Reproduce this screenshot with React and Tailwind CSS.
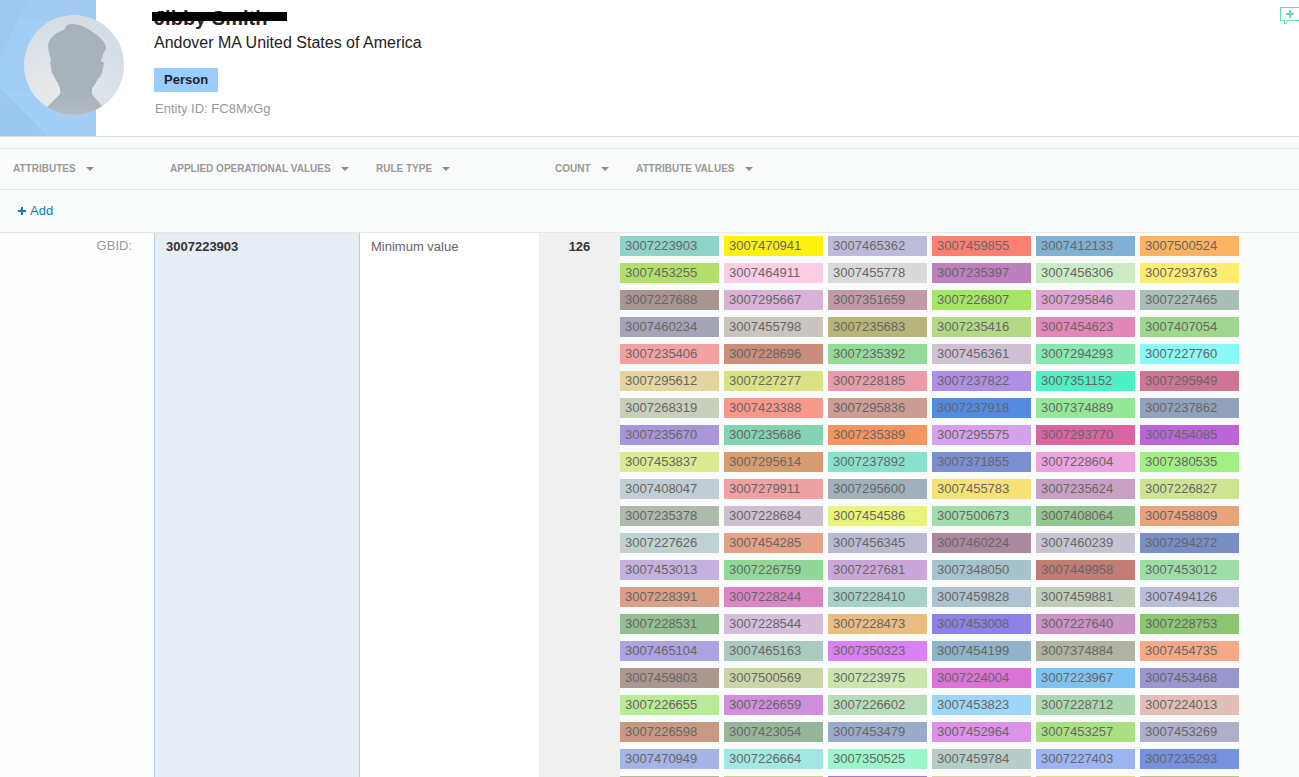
import React from "react";

const COLUMNS = [
  { label: "Attributes", cls: "w-[154px] pl-[13px]" },
  { label: "Applied Operational Values", cls: "w-[206px] pl-4" },
  { label: "Rule Type", cls: "w-[179px] pl-4" },
  { label: "Count", cls: "w-[81px] pl-4" },
  { label: "Attribute Values", cls: "pl-4" },
];

const VALUES = [
  ["3007223903", "bg-[#8dd3c7]"], ["3007470941", "bg-[#fff10c]"], ["3007465362", "bg-[#bebada]"], ["3007459855", "bg-[#fb8072]"], ["3007412133", "bg-[#80b1d3]"], ["3007500524", "bg-[#fdb462]"],
  ["3007453255", "bg-[#b3de69]"], ["3007464911", "bg-[#fccde5]"], ["3007455778", "bg-[#d9d9d9]"], ["3007235397", "bg-[#bc80bd]"], ["3007456306", "bg-[#ccebc5]"], ["3007293763", "bg-[#ffed6f]"],
  ["3007227688", "bg-[#a99491]"], ["3007295667", "bg-[#d9b3d7]"], ["3007351659", "bg-[#c19ba6]"], ["3007226807", "bg-[#a4e566]"], ["3007295846", "bg-[#dda4d3]"], ["3007227465", "bg-[#a9beb5]"],
  ["3007460234", "bg-[#a6a5b8]"], ["3007455798", "bg-[#ccc4be]"], ["3007235683", "bg-[#b7b57a]"], ["3007235416", "bg-[#b3d985]"], ["3007454623", "bg-[#e287ba]"], ["3007407054", "bg-[#9fd78f]"],
  ["3007235406", "bg-[#f5a1a2]"], ["3007228696", "bg-[#ca8c7b]"], ["3007235392", "bg-[#95da9b]"], ["3007456361", "bg-[#cfc1d3]"], ["3007294293", "bg-[#87e8b1]"], ["3007227760", "bg-[#8bf9f7]"],
  ["3007295612", "bg-[#e4d59f]"], ["3007227277", "bg-[#dae283]"], ["3007228185", "bg-[#eb9aaa]"], ["3007237822", "bg-[#af8fe4]"], ["3007351152", "bg-[#4cf2c5]"], ["3007295949", "bg-[#cf7593]"],
  ["3007268319", "bg-[#c9cfbc]"], ["3007423388", "bg-[#f9978b]"], ["3007295836", "bg-[#cc9d92]"], ["3007237918", "bg-[#528be0]"], ["3007374889", "bg-[#95e898]"], ["3007237862", "bg-[#91a1bc]"],
  ["3007235670", "bg-[#aa95d9]"], ["3007235686", "bg-[#84d3b2]"], ["3007235389", "bg-[#f59660]"], ["3007295575", "bg-[#d6a1eb]"], ["3007293770", "bg-[#db65a2]"], ["3007454085", "bg-[#bb65d9]"],
  ["3007453837", "bg-[#dcea92]"], ["3007295614", "bg-[#d89d6e]"], ["3007237892", "bg-[#88e1cd]"], ["3007371855", "bg-[#7d8fd3]"], ["3007228604", "bg-[#eba4dd]"], ["3007380535", "bg-[#a1f085]"],
  ["3007408047", "bg-[#c3cdd4]"], ["3007279911", "bg-[#eea3a2]"], ["3007295600", "bg-[#a3b0ba]"], ["3007455783", "bg-[#f6e275]"], ["3007235624", "bg-[#c8a0c4]"], ["3007226827", "bg-[#cfe395]"],
  ["3007235378", "bg-[#aebbaa]"], ["3007228684", "bg-[#cdbfcd]"], ["3007454586", "bg-[#eaf47d]"], ["3007500673", "bg-[#a2dbaa]"], ["3007408064", "bg-[#95c593]"], ["3007458809", "bg-[#e8a37d]"],
  ["3007227626", "bg-[#bfd1d0]"], ["3007454285", "bg-[#e4a188]"], ["3007456345", "bg-[#b8bbd0]"], ["3007460224", "bg-[#aa889f]"], ["3007460239", "bg-[#c6c4d3]"], ["3007294272", "bg-[#788ec5]"],
  ["3007453013", "bg-[#c4b1dd]"], ["3007226759", "bg-[#8fd897]"], ["3007227681", "bg-[#cba7d9]"], ["3007348050", "bg-[#a5c2cd]"], ["3007449958", "bg-[#c17d75]"], ["3007453012", "bg-[#9ddda8]"],
  ["3007228391", "bg-[#db9f86]"], ["3007228244", "bg-[#dc85c5]"], ["3007228410", "bg-[#a6d1c6]"], ["3007459828", "bg-[#adc2ce]"], ["3007459881", "bg-[#bfccb8]"], ["3007494126", "bg-[#babdd9]"],
  ["3007228531", "bg-[#93bf90]"], ["3007228544", "bg-[#d6bddb]"], ["3007228473", "bg-[#e9bc81]"], ["3007453008", "bg-[#8a82e6]"], ["3007227640", "bg-[#c994c3]"], ["3007228753", "bg-[#8dc671]"],
  ["3007465104", "bg-[#aea2e1]"], ["3007465163", "bg-[#acc9c0]"], ["3007350323", "bg-[#d981f5]"], ["3007454199", "bg-[#90b3c9]"], ["3007374884", "bg-[#b1b2a2]"], ["3007454735", "bg-[#f4a989]"],
  ["3007459803", "bg-[#ac9791]"], ["3007500569", "bg-[#cad6a4]"], ["3007223975", "bg-[#cde6b0]"], ["3007224004", "bg-[#dc73d6]"], ["3007223967", "bg-[#80c2f1]"], ["3007453468", "bg-[#9997cf]"],
  ["3007226655", "bg-[#baea95]"], ["3007226659", "bg-[#cf8fdb]"], ["3007226602", "bg-[#bbdcb9]"], ["3007453823", "bg-[#9fd5f6]"], ["3007228712", "bg-[#add8af]"], ["3007224013", "bg-[#e1beb6]"],
  ["3007226598", "bg-[#c69a83]"], ["3007423054", "bg-[#97b599]"], ["3007453479", "bg-[#9aacca]"], ["3007452964", "bg-[#dc93e7]"], ["3007453257", "bg-[#aae081]"], ["3007453269", "bg-[#b0afca]"],
  ["3007470949", "bg-[#a4b4e4]"], ["3007226664", "bg-[#a2e7e1]"], ["3007350525", "bg-[#9cf5cb]"], ["3007459784", "bg-[#b7cdc8]"], ["3007227403", "bg-[#9db4f0]"], ["3007235293", "bg-[#7592de]"],
  ["", "bg-[#a9bf9a]"], ["", "bg-[#c3d791]"], ["", "bg-[#a67cc4]"], ["", "bg-[#e3cba5]"], ["", "bg-[#f3d582]"], ["", "bg-[#c2bf98]"],
];

function Avatar() {
  return (
    <svg viewBox="0 0 100 100" className="w-[100px] h-[100px]" role="img" aria-label="Person">
      <defs>
        <radialGradient id="disc" cx="0.35" cy="0.8" r="0.8">
          <stop offset="0" stopColor="#e8ebed" />
          <stop offset="1" stopColor="#d4dce4" />
        </radialGradient>
        <linearGradient id="body" x1="0" y1="0" x2="0" y2="1">
          <stop offset="0.75" stopColor="#a8b2ba" />
          <stop offset="1" stopColor="#b3bbc2" />
        </linearGradient>
        <clipPath id="round">
          <circle cx="50" cy="50" r="50" />
        </clipPath>
      </defs>
      <circle cx="50" cy="50" r="50" fill="url(#disc)" />
      <path
        clipPath="url(#round)"
        fill="url(#body)"
        d="M23 92 L36 79 C37 76 36 74 35 71 C34 67 31 65 30 61 L28 58 C27 55 27 51 26 48 L27 46 C26 41 24 36 24 30 C25 23 32 17 40 15 C41 14 41 11 43 10 C47 8 53 9 58 11 C67 15 75 21 79 26 C81 29 82 31 82 33 C80 37 78 42 77 46 L80 48 C79 54 78 59 76 62 C73 64 72 69 68 73 V79 L78 91 L70 100 H30 Z"
      />
    </svg>
  );
}

function Backdrop() {
  return (
    <svg viewBox="0 0 96 136" className="absolute inset-0 w-full h-full" aria-hidden="true">
      <rect width="96" height="136" fill="#a3cef6" />
      <path d="M0 0 H28 L18 20 L0 60 Z" fill="#9dc7ef" />
      <path d="M28 0 H96 V20 H18 Z" fill="#a0caf2" />
      <path d="M18 20 L40 50 L26 74 L0 77 V60 Z" fill="#a1cdf5" />
      <path d="M0 77 L26 75 L36 95 L0 87 Z" fill="#9fcbf4" />
      <path d="M0 87 L47 136 H0 Z" fill="#9cc7ef" />
      <path d="M0 105 L30 119 V136 H8 V130 L0 127 Z" fill="#9ac5ed" />
      <path d="M88 120 L96 98 V136 H87 Z" fill="#a1cbf3" />
    </svg>
  );
}

function AddNoteIcon() {
  return (
    <svg viewBox="0 0 20 20" className="w-5 h-5" fill="#68d8b5" shapeRendering="crispEdges">
      <path d="M1 1 H20 V2 H2 V14 H6 V18 H5 V15 H1 Z" />
      <path d="M8 14 H20 V15 H9 V16 H8 V17 H7 V18 H6 V17 H7 V16 H8 Z" />
      <path d="M10 4 H12 V7 H15 V9 H12 V12 H10 V9 H7 V7 H10 Z" />
    </svg>
  );
}

function SortArrow() {
  return (
    <svg viewBox="0 0 8 4" className="w-2 h-1" fill="#8c8c8c">
      <path d="M0 0 H8 L4 4 Z" />
    </svg>
  );
}

function ProfileHeader() {
  return (
    <header className="flex h-[137px] bg-white border-b border-[#dde1e0]">
      <div className="relative w-24 shrink-0">
        <Backdrop />
        <div className="absolute left-6 top-[15px]">
          <Avatar />
        </div>
      </div>
      <div className="flex-1 pl-[58px] pt-[6px]">
        <h1 className="relative w-fit text-xl leading-6 font-bold text-[#222]">
          Jibby Smith
          <span className="absolute -left-[2px] top-[6px] w-[135px] h-[9px] bg-black" />
        </h1>
        <p className="pt-px text-base leading-6 text-[#222]">Andover MA United States of America</p>
        <span className="inline-block mt-[13px] px-[10px] bg-[#99ccff] text-[13px] leading-6 font-bold text-[#222]">Person</span>
        <p className="mt-[9px] pl-px text-[13px] leading-4 text-[#999]">Entity ID: FC8MxGg</p>
      </div>
      <button type="button" aria-label="Add note" className="self-start mt-[6px]">
        <AddNoteIcon />
      </button>
    </header>
  );
}

export default function App() {
  return (
    <div className="h-screen overflow-hidden bg-[#fafcfb] font-['Liberation_Sans',Arial,sans-serif] text-[13px]">
      <ProfileHeader />

      <table className="w-full mt-[11px] table-fixed border-separate border-spacing-0 text-left">
        <thead>
          <tr>
            {COLUMNS.map((c) => (
              <th key={c.label} className={`h-[42px] p-0 border-y border-[#e6e8e7] ${c.cls}`}>
                <button type="button" className="flex items-center gap-[10px] text-[10px] leading-4 font-bold uppercase text-[#999] whitespace-nowrap">
                  {c.label}
                  <SortArrow />
                </button>
              </th>
            ))}
          </tr>
        </thead>
        <tbody>
          <tr>
            <td colSpan={5} className="h-[43px] p-0 pl-[18px] border-b border-[#e6e8e7]">
              <button type="button" className="flex items-center gap-1 leading-4 text-[#0a7cc0]">
                <svg viewBox="0 0 8 8" className="w-2 h-2" fill="#0a7cc0" shapeRendering="crispEdges">
                  <path d="M3 0 H5 V3 H8 V5 H5 V8 H3 V5 H0 V3 H3 Z" />
                </svg>
                Add
              </button>
            </td>
          </tr>
          <tr className="align-top">
            <td className="p-0 pt-[5px] pr-[22px] text-right leading-4 text-[#999] bg-[#fdfdfd]">GBID:</td>
            <td className="p-0 pt-[6px] pl-[11px] leading-4 font-bold text-[#333] bg-[#e7edf4] border-x border-[#b3d4e8]">3007223903</td>
            <td className="p-0 pt-[6px] pl-[11px] leading-4 text-[#666] bg-white">Minimum value</td>
            <td className="p-0 pt-[6px] text-center leading-4 font-bold text-[#333] bg-[#f0f0f0]">126</td>
            <td className="p-0 pt-[3px]">
              <ul className="flex flex-wrap gap-x-[5px] gap-y-[7px] max-w-[640px]">
                {VALUES.map(([value, color], i) => (
                  <li key={i} className={`w-[99px] h-5 pl-[5px] leading-5 text-[#666] ${color}`}>
                    {value}
                  </li>
                ))}
              </ul>
            </td>
          </tr>
        </tbody>
      </table>
    </div>
  );
}
